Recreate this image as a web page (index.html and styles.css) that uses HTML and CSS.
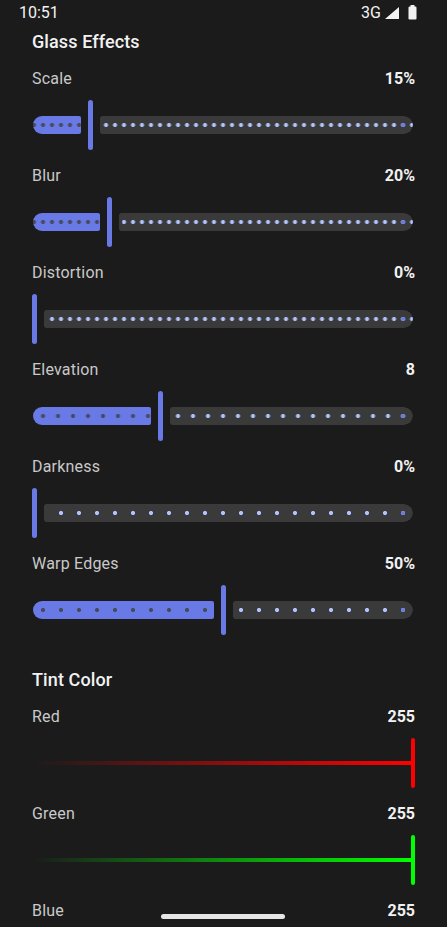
FILE: index.html
```html
<!DOCTYPE html>
<html lang="en">
<head>
<meta charset="utf-8">
<meta name="viewport" content="width=device-width, initial-scale=1">
<title>Glass Effects</title>
<link rel="stylesheet" href="styles.css">
</head>
<body>
<div class="status-bar">
  <span class="clock">10:51</span>
  <div class="status-icons">
    <span class="net">3G</span>
    <svg class="signal" width="15" height="14" viewBox="0 0 15 14"><polygon points="0,13 14,13 14,1" fill="#f2f2f2"/></svg>
    <svg class="battery" width="9" height="15" viewBox="0 0 9 15"><rect x="2.5" y="0" width="4" height="2" rx="0.5" fill="#f2f2f2"/><rect x="0.5" y="1.5" width="8" height="13" rx="1.2" fill="#f2f2f2"/></svg>
  </div>
</div>

<main class="content">
  <section class="group">
    <h2 class="group-title">Glass Effects</h2>

    <div class="setting">
      <div class="row"><span class="label">Scale</span><span class="value">15%</span></div>
      <div class="slider" style="--step:9px;--aw:48px;--x0:67px">
        <div class="track active"></div><div class="thumb"></div><div class="track inactive"></div>
      </div>
    </div>

    <div class="setting">
      <div class="row"><span class="label">Blur</span><span class="value">20%</span></div>
      <div class="slider" style="--step:9px;--aw:67px;--x0:86px">
        <div class="track active"></div><div class="thumb"></div><div class="track inactive"></div>
      </div>
    </div>

    <div class="setting">
      <div class="row"><span class="label">Distortion</span><span class="value">0%</span></div>
      <div class="slider" style="--step:9px;--x0:11px">
        <div class="thumb start"></div><div class="track inactive"></div>
      </div>
    </div>

    <div class="setting">
      <div class="row"><span class="label">Elevation</span><span class="value">8</span></div>
      <div class="slider" style="--step:15px;--aw:118px;--x0:137px">
        <div class="track active"></div><div class="thumb"></div><div class="track inactive"></div>
      </div>
    </div>

    <div class="setting">
      <div class="row"><span class="label">Darkness</span><span class="value">0%</span></div>
      <div class="slider" style="--step:18px;--x0:11px">
        <div class="thumb start"></div><div class="track inactive"></div>
      </div>
    </div>

    <div class="setting">
      <div class="row"><span class="label">Warp Edges</span><span class="value">50%</span></div>
      <div class="slider" style="--step:18px;--aw:181px;--x0:200px">
        <div class="track active"></div><div class="thumb"></div><div class="track inactive"></div>
      </div>
    </div>
  </section>

  <section class="group tint-group">
    <h2 class="group-title">Tint Color</h2>

    <div class="setting">
      <div class="row"><span class="label">Red</span><span class="value">255</span></div>
      <div class="tint red">
        <div class="tint-line"></div><div class="tint-thumb"></div>
      </div>
    </div>

    <div class="setting">
      <div class="row"><span class="label">Green</span><span class="value">255</span></div>
      <div class="tint green">
        <div class="tint-line"></div><div class="tint-thumb"></div>
      </div>
    </div>

    <div class="setting">
      <div class="row"><span class="label">Blue</span><span class="value">255</span></div>
      <div class="tint blue">
        <div class="tint-line"></div><div class="tint-thumb"></div>
      </div>
    </div>
  </section>
</main>

<div class="home-indicator"></div>
</body>
</html>
```

FILE: styles.css
```css
* { box-sizing: border-box; }

html, body {
  margin: 0;
  padding: 0;
  height: 927px;
  overflow: hidden;
  background: #1b1b1b;
  font-family: Roboto, "Noto Sans", sans-serif;
  color: #f0f0f0;
}

.status-bar {
  height: 26px;
  display: flex;
  align-items: center;
  justify-content: space-between;
  padding: 0 30px 0 19px;
}

.clock {
  font-size: 16px;
  line-height: 26px;
  color: #f2f2f2;
}

.status-icons {
  display: flex;
  align-items: center;
  gap: 4px;
}

.net {
  font-size: 16px;
  color: #f2f2f2;
  line-height: 26px;
}

.battery { margin-left: 4px; margin-top: -1px; }

.content {
  padding: 4px 32px 0 32px;
}

.group {
  display: flex;
  flex-direction: column;
  gap: 14px;
}

.tint-group {
  margin-top: 33px;
}

.group-title {
  margin: 0 0 -1px 0;
  font-size: 18px;
  font-weight: 500;
  line-height: 24px;
  color: #f2f2f2;
  letter-spacing: 0.1px;
}

.setting {
  display: flex;
  flex-direction: column;
  gap: 11px;
}

.row {
  height: 22px;
  display: flex;
  align-items: center;
  justify-content: space-between;
}

.label {
  font-size: 16px;
  color: #c9c9c9;
  letter-spacing: 0.2px;
}

.value {
  font-size: 16px;
  font-weight: 700;
  color: #f2f2f2;
}

/* Discrete slider */
.slider {
  height: 50px;
  display: flex;
  align-items: center;
  gap: 7px;
  margin: 0 2px 0 1px;
}

.track {
  height: 18px;
}

.track.active {
  width: var(--aw);
  flex: none;
  background-color: #6979e6;
  background-image: radial-gradient(circle, #474a5a 0, #474a5a 1.7px, rgba(71,74,90,0) 2.4px);
  background-repeat: repeat-x;
  background-size: var(--step) 100%;
  background-position: calc(10px - var(--step) / 2) center;
  border-radius: 9px 2px 2px 9px;
}

.track.inactive {
  flex: 1;
  position: relative;
  padding-left: 3px;
  background-image:
    radial-gradient(circle, #b2c4ff 0, #b2c4ff 1.7px, rgba(178,196,255,0) 2.4px),
    linear-gradient(#3a3a3a, #3a3a3a);
  background-repeat: repeat-x, no-repeat;
  background-size: var(--step) 100%, 100% 100%;
  background-position: calc(10px - var(--step) / 2 - var(--x0)) center, 0 0;
  background-origin: padding-box, padding-box;
  background-clip: content-box, padding-box;
  border-radius: 2px 9px 9px 2px;
}

.track.inactive::after {
  content: "";
  position: absolute;
  right: 8px;
  top: 7px;
  width: 4px;
  height: 4px;
  border-radius: 50%;
  background: #6979e6;
}

.thumb {
  width: 5px;
  height: 50px;
  flex: none;
  border-radius: 3px;
  background: #6979e6;
}

.thumb.start {
  margin-left: -1px;
}

/* Tint sliders */
.tint {
  height: 50px;
  display: flex;
  align-items: center;
  margin-left: 1px;
}

.tint-line {
  flex: 1;
  height: 4px;
  border-radius: 2px;
}

.tint-thumb {
  width: 4px;
  height: 50px;
  flex: none;
  border-radius: 2px;
  margin-left: -2px;
}

.red .tint-line { background: linear-gradient(90deg, rgba(255,0,0,0), #ff0000); }
.red .tint-thumb { background: #ff0000; }
.green .tint-line { background: linear-gradient(90deg, rgba(0,255,0,0), #00ff00); }
.green .tint-thumb { background: #00ff00; }
.blue .tint-line { background: linear-gradient(90deg, rgba(0,0,255,0), #0000ff); }
.blue .tint-thumb { background: #0000ff; }

.home-indicator {
  position: absolute;
  left: 161px;
  top: 914px;
  width: 124px;
  height: 5px;
  border-radius: 3px;
  background: #e6e6e6;
}
```
